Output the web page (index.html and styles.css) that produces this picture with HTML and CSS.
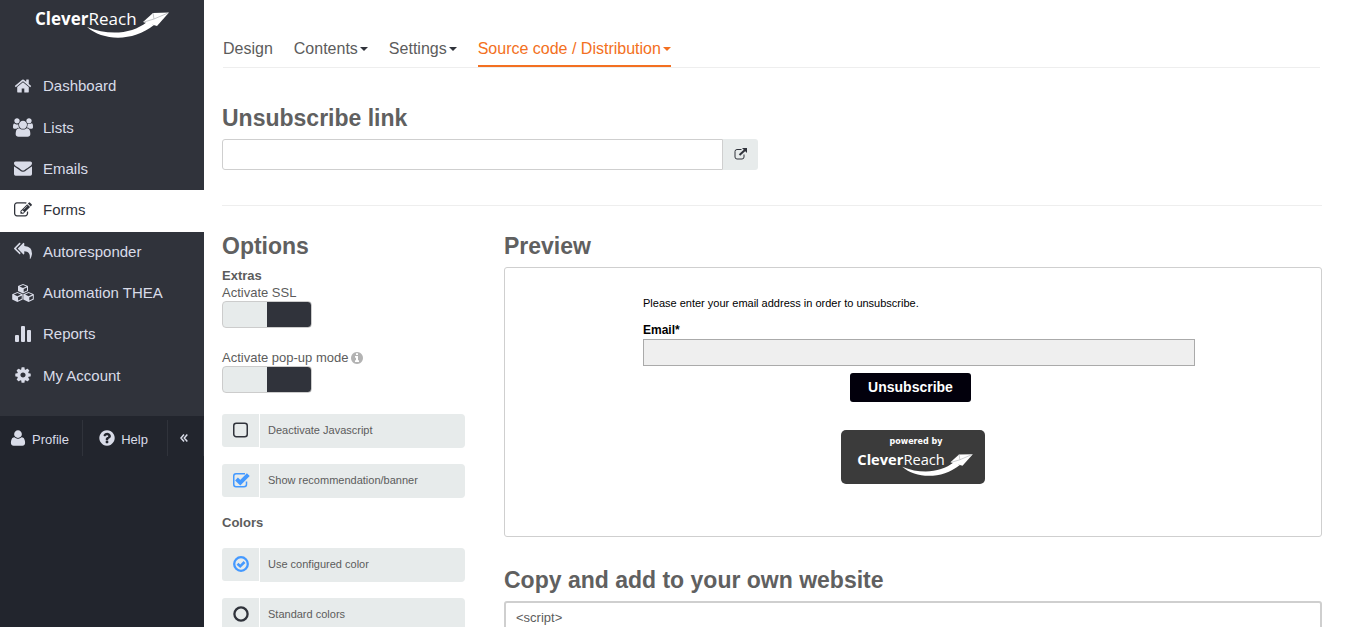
FILE: index.html
```
<!DOCTYPE html>
<html lang="en">
<head>
  <meta charset="utf-8">
  <title>CleverReach - Forms</title>
  <link rel="stylesheet" href="styles.css">
</head>
<body>
  <aside class="sidebar">
    <div class="sidebar-top">
      <a href="#" class="logo" aria-label="CleverReach">
        <svg width="135" height="29" viewBox="0 0 135 29">
          <text class="logo-text" x="0" y="15"><tspan class="logo-bold">Clever</tspan>Reach</text>
          <path d="M52 17C68 31 98 32 119 15L112 12C97 24 74 26 52 17Z"/>
          <path d="M108 12L118 3L134 2.500L122 16Z"/>
          <path class="logo-fold" d="M118 3L119 9L133 3M119 9L109 12"/>
        </svg>
      </a>
      <nav class="menu">
        <a href="#"><span class="icon"><svg width="18" height="18" viewBox="0 0 1792 1792"><path d="M1472 992v480q0 26-19 45t-45 19h-384v-384h-256v384h-384q-26 0-45-19t-19-45v-480q0-1 .5-3t.5-3l575-474 575 474q1 2 1 6zm223-69l-62 74q-8 9-21 11h-3q-13 0-21-7l-692-577-692 577q-12 8-24 7-13-2-21-11l-62-74q-8-10-7-23.5t11-21.5l719-599q32-26 76-26t76 26l244 204v-195q0-14 9-23t23-9h192q14 0 23 9t9 23v408l219 182q10 8 11 21.500t-7 23.500z"/></svg></span>Dashboard</a>
        <a href="#"><span class="icon"><svg width="20" height="19" viewBox="0 0 1920 1792"><path d="M593 896q-162 5-265 128h-134q-82 0-138-40.500t-56-118.500q0-353 124-353 6 0 43.500 21t97.500 42.500 119 21.500q67 0 133-23-5 37-5 66 0 159 81 289zm1071 637q0 120-73 189.500t-194 69.500h-874q-121 0-194-69.500t-73-189.500q0-53 3.500-103.500t14-109 26.500-108.500 43-97.500 62-81 85.500-53.500 111.500-20q10 0 43 21.500t73 48 107 48 135 21.500 135-21.500 107-48 73-48 43-21.500q61 0 111.500 20t85.500 53.500 62 81 43 97.500 26.500 108.500 14 109 3.500 103.500zm-1024-1277q0 106-75 181t-181 75-181-75-75-181 75-181 181-75 181 75 75 181zm704 384q0 159-112.500 271.500t-271.500 112.500-271.500-112.500-112.500-271.500 112.500-271.500 271.500-112.500 271.500 112.500 112.500 271.500zm576 225q0 78-56 118.500t-138 40.500h-134q-103-123-265-128 81-130 81-289 0-29-5-66 66 23 133 23 59 0 119-21.500t97.500-42.500 43.500-21q124 0 124 353zm-128-609q0 106-75 181t-181 75-181-75-75-181 75-181 181-75 181 75 75 181z"/></svg></span>Lists</a>
        <a href="#"><span class="icon"><svg width="18" height="18" viewBox="0 0 1792 1792"><path d="M1792 710v794q0 66-47 113t-113 47h-1472q-66 0-113-47t-47-113v-794q44 49 101 87 362 246 497 345 57 42 92.500 65.500t94.500 48 110 24.500h2q51 0 110-24.500t94.500-48 92.500-65.500q170-123 498-345 57-39 100-87zm0-294q0 79-49 151t-122 123q-376 261-468 325-10 7-42.500 31t-54 38.500-52 32.500-57.500 27-50 9h-2q-23 0-50-9t-57.500-27-52-32.500-54-38.500-42.500-31q-91-64-262-182.500t-205-142.500q-62-42-117-115.500t-55-136.500q0-78 41.500-130t118.500-52h1472q65 0 112.500 47t47.500 113z"/></svg></span>Emails</a>
        <a href="#" class="active"><span class="icon"><svg width="18" height="18" viewBox="0 0 1792 1792"><path d="M888 1184l116-116-152-152-116 116v56h96v96h56zm440-720q-16-16-33 1l-350 350q-17 17-1 33t33-1l350-350q17-17 1-33zm80 594v190q0 119-84.500 203.500t-203.500 84.500h-832q-119 0-203.500-84.500t-84.500-203.500v-832q0-119 84.500-203.500t203.500-84.500h832q63 0 117 25 15 7 18 23 3 17-9 29l-49 49q-14 14-32 8-23-6-45-6h-832q-66 0-113 47t-47 113v832q0 66 47 113t113 47h832q66 0 113-47t47-113v-126q0-13 9-22l64-64q15-15 35-7t20 29zm-96-738l288 288-672 672h-288v-288zm444 132l-92 92-288-288 92-92q28-28 68-28t68 28l152 152q28 28 28 68t-28 68z"/></svg></span>Forms</a>
        <a href="#"><span class="icon"><svg width="18" height="18" viewBox="0 0 1792 1792"><path d="M640 1082v70q0 42-39 59-13 5-25 5-27 0-45-19l-512-512q-19-19-19-45t19-45l512-512q29-31 70-14 39 17 39 59v69l-397 398q-19 19-19 45t19 45zm1152 58q0 58-17 133.500t-38.500 138-48 125-40.500 90.500l-20 40q-8 17-28 17-6 0-9-1-25-8-23-34 43-400-106-565-64-71-170.500-110.500t-267.500-52.500v251q0 42-39 59-13 5-25 5-27 0-45-19l-512-512q-19-19-19-45t19-45l512-512q29-31 70-14 39 17 39 59v262q411 28 599 221 169 173 169 509z"/></svg></span>Autoresponder</a>
        <a href="#"><span class="icon"><svg width="22" height="18" viewBox="0 0 22 18">
          <path fill-rule="evenodd" d="M11 0L16 2V7L11 9.500L6 7V2ZM11 1L7.500 2.400L11 3.900L14.500 2.400ZM11.700 5V8L15 6.500V3.600Z"/>
          <path fill-rule="evenodd" d="M5.400 8L10.700 10.200V15.500L5.400 18L0.200 15.500V10.200ZM5.400 9.100L1.900 10.600L5.400 12.200L8.900 10.600ZM6.100 13.200V16.500L9.700 14.800V11.700Z"/>
          <path fill-rule="evenodd" d="M16.600 8L21.800 10.200V15.500L16.600 18L11.300 15.500V10.200ZM16.600 9.100L13.100 10.600L16.600 12.200L20.100 10.600ZM17.300 13.200V16.500L20.800 14.800V11.700Z"/>
        </svg></span>Automation THEA</a>
        <a href="#"><span class="icon"><svg width="18" height="18" viewBox="0 0 18 18"><rect x="1" y="10" width="4" height="7" rx="1"/><rect x="7" y="1" width="4" height="16" rx="1"/><rect x="13" y="5" width="4" height="12" rx="1"/></svg></span>Reports</a>
        <a href="#"><span class="icon"><svg width="18" height="18" viewBox="0 0 1792 1792"><path d="M1152 896q0-106-75-181t-181-75-181 75-75 181 75 181 181 75 181-75 75-181zm512-109v222q0 12-8 23t-20 13l-185 28q-19 54-39 91 35 50 107 138 10 12 10 25t-9 23q-27 37-99 108t-94 71q-12 0-26-9l-138-108q-44 23-91 38-16 136-29 186-7 28-36 28h-222q-14 0-24.500-8.500t-11.500-21.500l-28-184q-49-16-90-37l-141 107q-10 9-25 9-14 0-25-11-126-114-165-168-7-10-7-23 0-12 8-23 15-21 51-66.500t54-70.500q-27-50-41-99l-183-27q-13-2-21-12.500t-8-23.500v-222q0-12 8-23t19-13l186-28q14-46 39-92-40-57-107-138-10-12-10-24 0-10 9-23 26-36 98.500-107.500t94.500-71.500q13 0 26 10l138 107q44-23 91-38 16-136 29-186 7-28 36-28h222q14 0 24.500 8.500t11.500 21.500l28 184q49 16 90 37l142-107q9-9 24-9 13 0 25 10 129 119 165 170 7 8 7 22 0 12-8 23-15 21-51 66.500t-54 70.500q26 50 41 98l183 28q13 2 21 12.500t8 23.500z"/></svg></span>My Account</a>
      </nav>
    </div>
    <div class="sidebar-bottom">
      <a href="#"><svg width="18" height="18" viewBox="0 0 1792 1792"><path d="M1600 1405q0 120-73 189.500t-194 69.500h-874q-121 0-194-69.500t-73-189.500q0-53 3.500-103.500t14-109 26.500-108.500 43-97.500 62-81 85.500-53.500 111.500-20q9 0 42 21.500t74.500 48 108 48 133.500 21.500 133.500-21.500 108-48 74.500-48 42-21.500q61 0 111.500 20t85.500 53.500 62 81 43 97.500 26.500 108.500 14 109 3.500 103.500zm-320-893q0 159-112.500 271.500t-271.500 112.500-271.500-112.500-112.500-271.500 112.500-271.500 271.500-112.500 271.500 112.500 112.500 271.500z"/></svg>Profile</a>
      <a href="#"><svg width="18" height="18" viewBox="0 0 1792 1792"><path d="M1024 1376v-192q0-14-9-23t-23-9h-192q-14 0-23 9t-9 23v192q0 14 9 23t23 9h192q14 0 23-9t9-23zm256-672q0-88-55.500-163t-138.500-116-170-41q-243 0-371 213-15 24 8 42l132 100q7 6 19 6 16 0 25-12 53-68 86-92 34-24 86-24 48 0 85.500 26t37.500 59q0 38-20 61t-68 45q-63 28-115.500 86.500t-52.500 125.500v36q0 14 9 23t23 9h192q14 0 23-9t9-23q0-19 21.500-49.500t54.500-49.500q32-18 49-28.500t46-35 44.500-48 28-60.500 12.500-81zm384 192q0 209-103 385.500t-279.500 279.500-385.500 103-385.500-103-279.500-279.500-103-385.500 103-385.500 279.500-279.500 385.500-103 385.500 103 279.500 279.500 103 385.500z"/></svg>Help</a>
      <button type="button" class="collapse" aria-label="Collapse menu"><svg width="8" height="8" viewBox="0 0 8 8"><path d="M4 0.500L1 4L4 7.500M7.300 0.500L4.300 4L7.300 7.500"/></svg></button>
    </div>
  </aside>

  <main class="content">
    <nav class="tabs">
      <a href="#">Design</a>
      <a href="#">Contents<span class="caret"></span></a>
      <a href="#">Settings<span class="caret"></span></a>
      <a href="#" class="active">Source code / Distribution<span class="caret"></span></a>
    </nav>

    <section class="link-section">
      <h2><label for="link">Unsubscribe link</label></h2>
      <div class="link-group">
        <input type="text" id="link">
        <button type="button" aria-label="Open link"><svg width="14" height="12" viewBox="0 0 14 12"><path class="line" d="M7.500 1.500H3Q1 1.500 1 3.500V9Q1 11 3 11H8Q10 11 10 9V6.500"/><path class="arrow" d="M5.500 7L11 2"/><path d="M8 0H13V5Z"/></svg></button>
      </div>
    </section>

    <div class="columns">
      <section class="options">
        <h2>Options</h2>
        <h3>Extras</h3>
        <div class="switch-row">
          <label for="ssl">Activate SSL</label>
          <input type="checkbox" class="switch" id="ssl">
        </div>
        <div class="switch-row">
          <label for="popup">Activate pop-up mode <svg class="info" width="14" height="14" viewBox="0 0 1792 1792"><path d="M1152 1376v-160q0-14-9-23t-23-9h-96v-512q0-14-9-23t-23-9h-320q-14 0-23 9t-9 23v160q0 14 9 23t23 9h96v320h-96q-14 0-23 9t-9 23v160q0 14 9 23t23 9h448q14 0 23-9t9-23zm-128-896v-160q0-14-9-23t-23-9h-192q-14 0-23 9t-9 23v160q0 14 9 23t23 9h192q14 0 23-9t9-23zm640 416q0 209-103 385.500t-279.500 279.500-385.500 103-385.500-103-279.500-279.500-103-385.500 103-385.500 279.500-279.500 385.500-103 385.500 103 279.500 279.500 103 385.500z"/></svg></label>
          <input type="checkbox" class="switch" id="popup">
        </div>

        <label class="choice">
          <span class="mark"><input type="checkbox"><svg width="18" height="16" viewBox="0 0 18 16"><rect x="1.750" y="1.250" width="13.500" height="13.500" rx="2.500"/></svg></span>
          <span class="choice-text">Deactivate Javascript</span>
        </label>
        <label class="choice">
          <span class="mark"><input type="checkbox" checked><svg width="18" height="16" viewBox="0 0 18 16"><path d="M14.500 9.500V12.300Q14.500 14.750 12 14.750H4Q1.750 14.750 1.750 12.300V4Q1.750 1.750 4 1.750H13"/><path class="tick" d="M4.500 7L8.300 10.700L16.300 2.700"/></svg></span>
          <span class="choice-text">Show recommendation/banner</span>
        </label>
        <h3 class="colors-title">Colors</h3>
        <label class="choice">
          <span class="mark"><input type="radio" name="colors" checked><svg width="18" height="16" viewBox="0 0 18 16"><circle cx="9" cy="8" r="6.800"/><path class="tick small" d="M5.500 7.700L8.200 10.300L12.500 6"/></svg></span>
          <span class="choice-text">Use configured color</span>
        </label>
        <label class="choice">
          <span class="mark"><input type="radio" name="colors"><svg width="18" height="16" viewBox="0 0 18 16"><circle cx="9" cy="8" r="6.600"/></svg></span>
          <span class="choice-text">Standard colors</span>
        </label>
      </section>

      <section class="result">
        <h2>Preview</h2>
        <div class="preview">
          <form class="preview-form">
            <p>Please enter your email address in order to unsubscribe.</p>
            <label for="email">Email*</label>
            <input type="text" id="email">
            <button type="button">Unsubscribe</button>
            <a href="#" class="badge" aria-label="powered by CleverReach">
              <span>powered by</span>
              <svg width="117" height="25" viewBox="0 0 135 29">
                <text class="logo-text" x="0" y="15"><tspan class="logo-bold">Clever</tspan>Reach</text>
                <path d="M52 17C68 31 98 32 119 15L112 12C97 24 74 26 52 17Z"/>
                <path d="M108 12L118 3L134 2.500L122 16Z"/>
                <path class="logo-fold" d="M118 3L119 9L133 3M119 9L109 12"/>
              </svg>
            </a>
          </form>
        </div>
        <h2><label for="code">Copy and add to your own website</label></h2>
        <textarea id="code" class="code" rows="10">&lt;script&gt;</textarea>
      </section>
    </div>
  </main>
</body>
</html>
```
FILE: styles.css
```
* {
  box-sizing: border-box;
}

body {
  display: flex;
  height: 100vh;
  margin: 0;
  overflow: hidden;
  font-family: "Liberation Sans", Arial, sans-serif;
  font-size: 13px;
  line-height: 17px;
  color: #5c5c5c;
  background-color: #ffffff;
}

a {
  color: inherit;
  text-decoration: none;
}

button, input, textarea {
  margin: 0;
  font-family: inherit;
}

svg {
  fill: currentColor;
  flex: none;
}

/* logo */
.logo-text {
  font-family: "Open Sans", "Noto Sans", sans-serif;
  font-size: 17px;
}

.logo-bold {
  font-weight: bold;
}

.logo-fold {
  fill: none;
  stroke: #b5b7bb;
  stroke-width: 0.8;
}

/* sidebar */
.sidebar {
  flex: none;
  width: 204px;
  background-color: #22252d;
  color: #d9dce8;
}

.sidebar-top {
  padding-bottom: 19px;
  background-color: #30333b;
}

.logo {
  display: block;
  height: 66px;
  padding: 10px 0 0 35px;
  color: #ffffff;
}

.menu {
  display: grid;
  grid-auto-rows: 1fr;
  height: 331px;
}

.menu a {
  display: flex;
  align-items: center;
  gap: 8px;
  padding: 0 0 2px 11px;
  font-size: 15px;
}

.menu .active {
  background-color: #ffffff;
  color: #30333b;
}

.icon {
  display: flex;
  justify-content: center;
  width: 24px;
}

.sidebar-bottom {
  display: grid;
  grid-template-columns: 83px 85px 1fr;
  padding-top: 4px;
}

.sidebar-bottom > * {
  display: flex;
  align-items: center;
  justify-content: center;
  gap: 5px;
  height: 36px;
  padding: 2px 4px 0 0;
  border: 0;
  border-right: 1px solid #30333b;
  font-size: 13px;
}

.sidebar-bottom svg {
  margin-top: -2px;
}

.collapse {
  background: none;
  color: inherit;
}

.collapse path {
  fill: none;
  stroke: currentColor;
  stroke-width: 1.5;
}

/* content */
.content {
  flex: 1;
  min-width: 0;
  padding: 29px 39px 0 18px;
}

.tabs {
  display: flex;
  gap: 21px;
  margin: 0 2px 0 1px;
  border-bottom: 1px solid #eeeeee;
  font-size: 16px;
}

.tabs a {
  display: flex;
  align-items: center;
  gap: 2px;
  height: 38px;
  padding-top: 2px;
  border-bottom: 2px solid transparent;
}

.caret {
  margin-top: 2px;
  border: 4px solid transparent;
  border-top-color: #30333b;
  border-bottom: 0;
}

.tabs .active {
  border-color: #f37021;
  color: #f37021;
}

.active .caret {
  border-top-color: #f37021;
}

h2 {
  margin: 0;
  font-size: 23px;
  line-height: 28px;
  color: #606060;
}

h3 {
  margin: 0;
  font-size: 13px;
  line-height: 17px;
}

.link-section {
  padding: 36px 0 35px;
  border-bottom: 1px solid #eeeeee;
}

.link-section h2 {
  margin-bottom: 7px;
}

.link-group {
  display: flex;
  max-width: 536px;
  height: 31px;
}

.link-group input {
  flex: 1;
  border: 1px solid #cfcfcf;
  border-radius: 3px 0 0 3px;
}

.link-group button {
  width: 35px;
  padding: 0 0 2px;
  border: 0;
  border-radius: 0 3px 3px 0;
  background-color: #e7ebeb;
  color: #30333b;
}

.link-group svg {
  display: block;
  margin: auto;
}

.line {
  fill: none;
  stroke: currentColor;
}

.arrow {
  stroke: currentColor;
  stroke-width: 2;
}

.columns {
  display: grid;
  grid-template-columns: 243px 1fr;
  gap: 39px;
  padding-top: 26px;
}

/* options */
.options h2 {
  margin-bottom: 7px;
}

.switch-row {
  margin-bottom: 21px;
}

.switch-row label {
  display: flex;
  align-items: center;
  gap: 2px;
}

.info {
  color: #b3b3b3;
}

.switch {
  appearance: none;
  display: block;
  width: 90px;
  height: 27px;
  border: 1px solid #cccccc;
  border-radius: 4px;
  background: linear-gradient(to right, #e7ebeb 50%, #30333b 50%);
}

.choice {
  display: flex;
  gap: 1px;
  height: 34px;
  margin-bottom: 16px;
  font-size: 11px;
}

.mark {
  display: grid;
  place-items: center;
  width: 37px;
  height: 33px;
  padding: 0 0 2px 1px;
  border-radius: 3px 0 0 3px;
  background-color: #e7ebeb;
  color: #30333b;
}

.mark input,
.mark svg {
  grid-area: 1 / 1;
}

.mark input {
  appearance: none;
  width: 18px;
  height: 18px;
}

.mark svg {
  fill: none;
  stroke: currentColor;
  stroke-width: 1.5;
  pointer-events: none;
}

.mark circle {
  stroke-width: 2.3;
}

.mark .tick {
  stroke-width: 4;
}

.mark .small {
  stroke-width: 2.6;
}

.mark input:checked + svg {
  color: #4499ff;
}

.choice-text {
  flex: 1;
  padding: 8px;
  border-radius: 0 4px 4px 0;
  background-color: #e7ebeb;
}

.colors-title {
  margin-bottom: 17px;
}

/* preview */
.result h2 {
  margin-bottom: 7px;
}

.preview {
  height: 270px;
  margin-bottom: 29px;
  padding-top: 27px;
  border: 1px solid #cfcfcf;
  border-radius: 3px;
}

.preview-form {
  display: flex;
  flex-direction: column;
  align-items: flex-start;
  max-width: 540px;
  margin: 0 auto;
  color: #000000;
}

.preview-form p {
  margin: 0 0 10px;
  font-size: 11px;
}

.preview-form label {
  font-size: 12px;
  font-weight: bold;
}

.preview-form input {
  box-sizing: content-box;
  width: 100%;
  height: 25px;
  padding: 0 5px;
  border: 1px solid #aaaaaa;
  background-color: #efefef;
}

.preview-form button {
  align-self: center;
  height: 29px;
  margin: 7px 5px 28px 0;
  padding: 0 18px 2px;
  border: 0;
  border-radius: 3px;
  background-color: #02000c;
  color: #ffffff;
  font-size: 14px;
  font-weight: bold;
}

.badge {
  align-self: center;
  display: flex;
  flex-direction: column;
  align-items: center;
  width: 144px;
  height: 54px;
  padding-top: 7px;
  border-radius: 5px;
  background-color: #3b3b3b;
  color: #ffffff;
}

.badge span {
  padding-left: 6px;
  font-family: "DejaVu Sans", sans-serif;
  font-size: 8px;
  font-weight: bold;
  line-height: 10px;
}

.badge svg {
  margin: 5px 0 0 4px;
}

.code {
  display: block;
  width: 100%;
  padding: 6px 10px;
  border: 2px solid #cfcfcf;
  border-radius: 3px;
  color: #5c5c5c;
  font-size: 13px;
  line-height: 17px;
  resize: none;
}
```
